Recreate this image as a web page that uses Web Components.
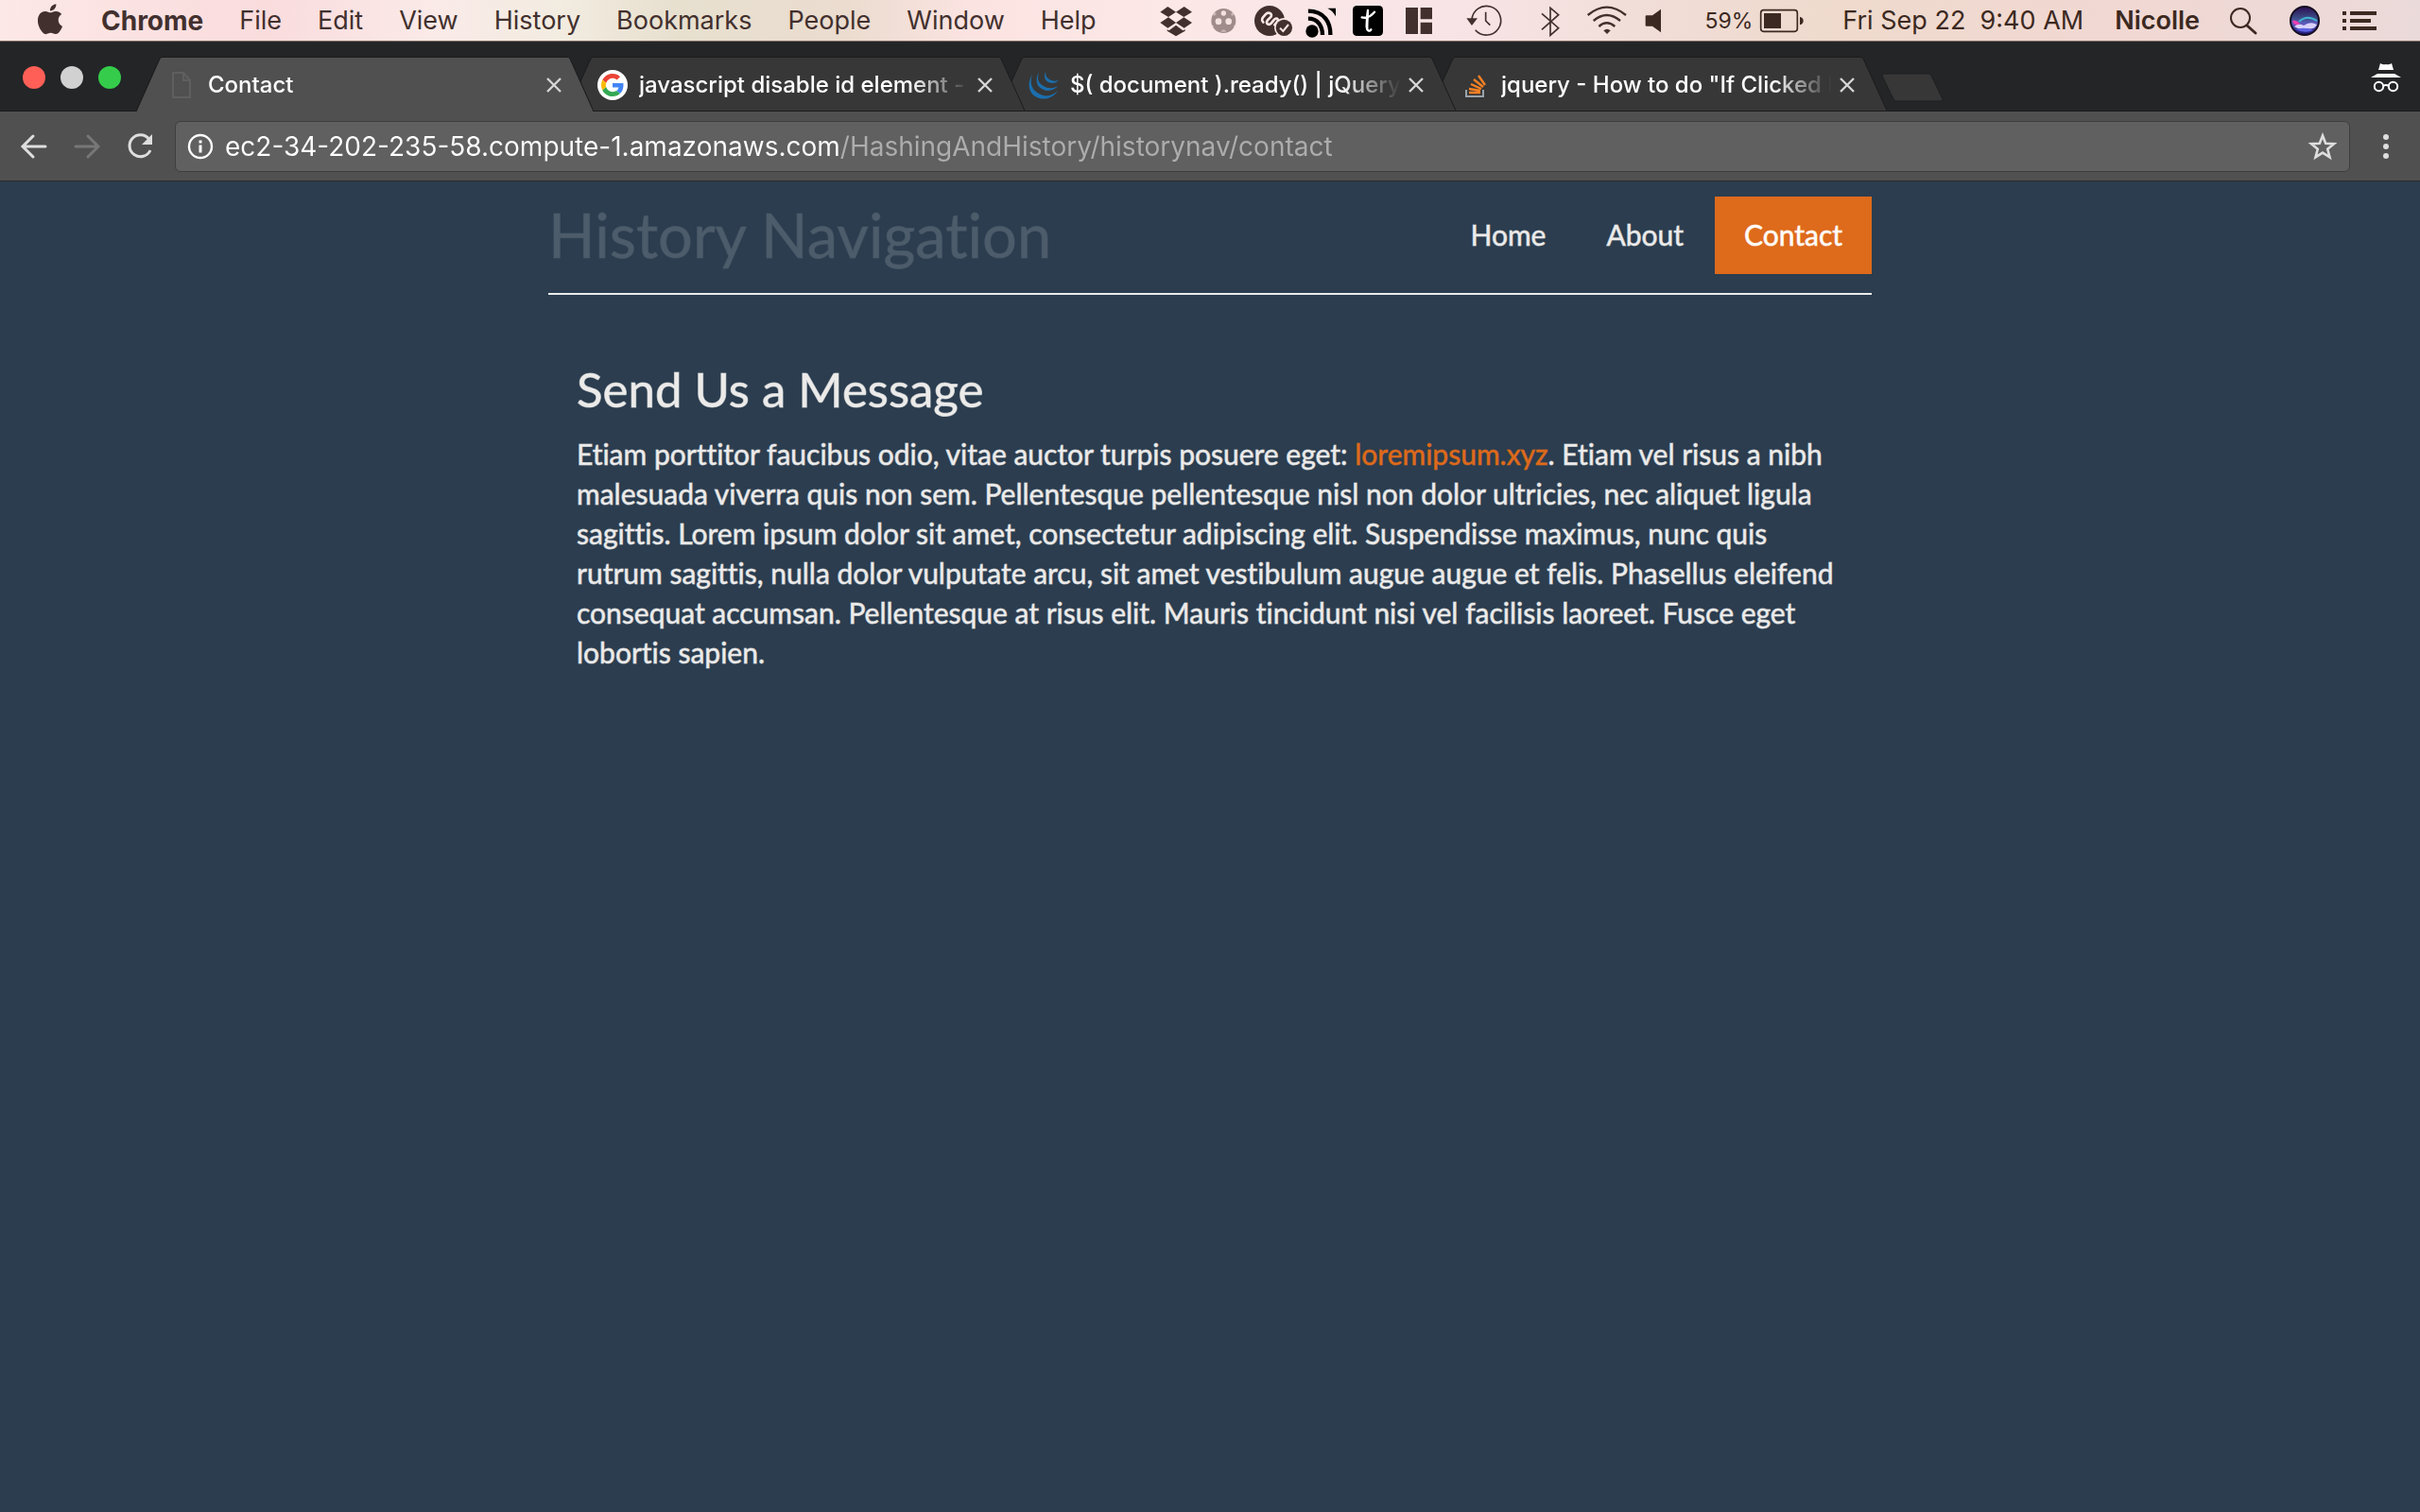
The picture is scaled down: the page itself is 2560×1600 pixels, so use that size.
<!DOCTYPE html>
<html lang="en">
<head>
<meta charset="utf-8">
<title>Contact</title>
<style>
  html, body { margin: 0; min-height: 100%; background: #2b3d4f; }
  body { font-family: Inter, "Liberation Sans", sans-serif; }
</style>
</head>
<body>
<mac-menu-bar></mac-menu-bar>
<browser-window>
  <site-page>
    <site-header slot="header"></site-header>
    <message-section>
      <span slot="heading">Send Us a Message</span>
      Etiam porttitor faucibus odio, vitae auctor turpis posuere eget: <message-link href="#loremipsum">loremipsum.xyz</message-link>. Etiam vel risus a nibh malesuada viverra quis non sem. Pellentesque pellentesque nisl non dolor ultricies, nec aliquet ligula sagittis. Lorem ipsum dolor sit amet, consectetur adipiscing elit. Suspendisse maximus, nunc quis rutrum sagittis, nulla dolor vulputate arcu, sit amet vestibulum augue augue et felis. Phasellus eleifend consequat accumsan. Pellentesque at risus elit. Mauris tincidunt nisi vel facilisis laoreet. Fusce eget lobortis sapien.
    </message-section>
  </site-page>
</browser-window>
<script>
const define = (name, html) => {
  customElements.define(name, class extends HTMLElement {
    constructor() {
      super();
      this.attachShadow({ mode: 'open' }).innerHTML = html;
    }
    connectedCallback() {
      for (const attr of ['href', 'aria-label']) {
        const target = this.shadowRoot.querySelector('[data-' + attr + ']');
        if (target && this.hasAttribute(attr)) target.setAttribute(attr, this.getAttribute(attr));
      }
    }
  });
};

const resetButton = `button { font: inherit; color: inherit; background: none; border: 0; padding: 0; margin: 0; display: block; white-space: pre; }
  svg { display: block; }`;

define('menu-item', `<style>:host { display: block; } ${resetButton}</style><button type="button"><slot></slot></button>`);

define('status-icon', `<style>:host { display: block; } ${resetButton}</style><button type="button" data-aria-label><slot></slot></button>`);

define('mac-menu-bar', `<style>
  :host { display: flex; justify-content: space-between; height: 43px; border-bottom: 1px solid #7c6a63;
    font-size: 27px; line-height: 44px; color: #42302e;
    background: linear-gradient(90deg, #fce8e6 0, #fadcdd 11%, #faeae8 18%, #f3ece1 23%, #e7e0cf 28%, #ebdccf 35%, #fbe3e1 40%, #fce8e7 48%, #f8e4e6 60%, #f0dcd4 70%, #efdacd 76%, #f1d8d3 88%, #ebdada 100%); }
  nav { display: flex; gap: 38px; padding-left: 37px; }
  .status { display: flex; padding-right: 36px; color: #3c2921; }
  svg { display: block; }
  .app { font-weight: 700; font-size: 28px; }
  .pct { font-size: 23px; }
  .battery { padding-right: 39px; }
  .clock { padding-right: 33px; }
  .user { font-weight: 600; padding-right: 21px; }
</style>
<nav aria-label="Menu bar">
  <menu-item aria-label="Apple"><svg width="32" height="43" viewBox="0 -3 24 32" fill="#42302e"><path d="M12.152 6.896c-.948 0-2.415-1.078-3.96-1.04-2.04.027-3.91 1.183-4.961 3.014-2.117 3.675-.546 9.103 1.519 12.09 1.013 1.454 2.208 3.09 3.792 3.039 1.52-.065 2.09-.987 3.935-.987 1.831 0 2.35.987 3.96.948 1.637-.026 2.676-1.48 3.676-2.948 1.156-1.688 1.636-3.325 1.662-3.415-.039-.013-3.182-1.221-3.22-4.857-.026-3.04 2.48-4.494 2.597-4.559-1.429-2.09-3.623-2.324-4.39-2.376-2-.156-3.675 1.09-4.61 1.09zM15.53 3.83c.843-1.012 1.4-2.427 1.245-3.83-1.207.052-2.662.805-3.532 1.818-.78.896-1.454 2.338-1.273 3.714 1.338.104 2.715-.688 3.559-1.701"/></svg></menu-item>
  <menu-item class="app">Chrome</menu-item><menu-item>File</menu-item><menu-item>Edit</menu-item><menu-item>View</menu-item><menu-item>History</menu-item><menu-item>Bookmarks</menu-item><menu-item>People</menu-item><menu-item>Window</menu-item><menu-item>Help</menu-item>
</nav>
<div class="status">
  <status-icon aria-label="Dropbox"><svg width="54" height="43" viewBox="54 0 162 129" fill="#42302e"><path d="M85 38 109 21 135 38 111 54zM135 38 161 21 186 38 160 54zM85 72 111 55 135 72 109 89zM135 72 160 55 186 72 161 89zM107 94 113 97 135 80 157 97 164 94V98L135 115 107 98z"/></svg></status-icon>
  <status-icon aria-label="Sync"><svg width="46" height="43" viewBox="216 0 138 129"><circle cx="286" cy="66" r="39" fill="#a08c8a"/><g fill="#f3e2e0"><circle cx="286" cy="42" r="8"/><circle cx="270" cy="68" r="10"/><circle cx="302" cy="68" r="10"/><path d="M277 101q9-14 18 0zM252 45l6-7 6 7-8 6zM309 45l6-7 6 7-8 6zM247 77l8 5-3 8-5-8zM325 77l-8 5 3 8 5-8z" opacity=".5"/></g></svg></status-icon>
  <status-icon aria-label="Share"><svg width="57" height="43" viewBox="354 0 171 129"><circle cx="432" cy="66" r="48" fill="#42302e"/><path d="M412 71C403 62 411 55 419 46 428 36 443 43 436 54L425 65C418 75 430 82 437 74L447 62C456 53 463 63 455 71L448 79" fill="none" stroke="#fbe8e6" stroke-width="8" stroke-linecap="round"/><circle cx="478" cy="88" r="31" fill="#fbe8e6"/><circle cx="478" cy="88" r="26" fill="#42302e"/><path d="M465 89 475 99 492 78" fill="none" stroke="#fbe8e6" stroke-width="6"/></svg></status-icon>
  <status-icon aria-label="Feed"><svg width="48" height="43" viewBox="525 0 144 129"><circle cx="567" cy="99" r="20" fill="#000"/><clipPath id="f"><path d="M554 26H642V111H554z"/></clipPath><g fill="none" stroke="#000" stroke-width="13" clip-path="url(#f)"><path d="M554 59c32 0 46 24 46 52M554 35c53 0 72 38 71 76"/></g><path d="M616 26h26v26c-6-12-14-20-26-26z"/></svg></status-icon>
  <status-icon aria-label="Tweet"><svg width="53" height="43" viewBox="669 0 159 129"><rect x="696" y="18" width="96" height="96" rx="13"/><path d="M744 33c-3 20-4 42-3 54 1 13 9 13 13 7M725 55c15 4 30-5 40-17" fill="none" stroke="#fff" stroke-width="7" stroke-linecap="round"/><path d="M742 35q5-5 5 0l-2 55-4 8q-5-5-4-18z" fill="#fff"/></svg></status-icon>
  <status-icon aria-label="Window layout"><svg width="58" height="43" viewBox="828 0 174 129" fill="#42302e"><path d="M864 24h39v84h-39zM911 24h37v37h-37zM911 71h37v37h-37z"/></svg></status-icon>
  <status-icon aria-label="Time Machine"><svg width="76" height="43" viewBox="-18 0 228 129"><path d="M54 65A46 46 0 1 1 65 95" fill="none" stroke="#42302e" stroke-width="5"/><path d="M37 58H72L54 81z" fill="#42302e"/><path d="M98 38V66L112 80" fill="none" stroke="#42302e" stroke-width="5"/></svg></status-icon>
  <status-icon aria-label="Bluetooth"><svg width="55" height="43" viewBox="210 0 165 129"><path d="M276 43 329 89 303 112V25L329 47 276 94" fill="none" stroke="#42302e" stroke-width="5"/></svg></status-icon>
  <status-icon aria-label="Wi-Fi"><svg width="67" height="43" viewBox="375 0 201 129"><g fill="none" stroke="#42302e" stroke-width="7"><path d="M422 48Q482 -2 543 48M440 66Q482 30 525 66M457 84Q482 62 508 84"/></g><path d="M472 97Q483 88 494 97L483 108z" fill="#42302e"/></svg></status-icon>
  <status-icon aria-label="Sound"><svg width="73" height="43" viewBox="576 0 219 129"><path d="M608 49h19l27-20v74L627 83H608q-3 0-3-3V52q0-3 3-3z" fill="#3c2921"/></svg></status-icon>
  <menu-item class="pct">59%</menu-item>
  <status-icon class="battery" aria-label="Battery"><svg width="56" height="43" viewBox="942 0 168 129"><rect x="968" y="32" width="116" height="68" rx="9" fill="none" stroke="#3c2921" stroke-width="5"/><rect x="978" y="42" width="54" height="48" fill="#3c2921"/><path d="M1092 53q11 3 11 13t-11 13z" fill="#3c2921"/></svg></status-icon>
  <menu-item class="clock">Fri Sep 22  9:40 AM</menu-item>
  <menu-item class="user">Nicolle</menu-item>
  <status-icon aria-label="Search"><svg width="62" height="43" viewBox="0 0 62 43" fill="none" stroke="#3c2921"><circle cx="22" cy="19" r="10" stroke-width="2"/><path d="M29 27 38 35" stroke-width="3" stroke-linecap="round"/></svg></status-icon>
  <status-icon aria-label="Siri"><svg width="58" height="43" viewBox="0 0 58 43"><defs><linearGradient id="s" x1="0" y1="0" x2="0" y2="1"><stop offset="0" stop-color="#2c0d52"/><stop offset=".4" stop-color="#3b4c86"/><stop offset=".6" stop-color="#5f5cc0"/><stop offset="1" stop-color="#1b1470"/></linearGradient></defs><circle cx="28" cy="22" r="15" fill="url(#s)" stroke="#150d20" stroke-width="2"/><path d="M22 23Q30 15 41 22" fill="none" stroke="#3fb4cf" stroke-width="2"/><path d="M15 22Q19 20 23 25L20 27Q16 26 15 22z" fill="#ec3fb0"/><path d="M17 28Q22 24 27 27 34 22 41 26 38 32 29 30 22 32 17 28z" fill="#d9d0fa"/><path d="M19 31Q28 28 37 32 28 36 19 31z" fill="#5d63e5"/></svg></status-icon>
  <status-icon aria-label="Notification Center"><svg width="56" height="43" viewBox="0 0 56 43" fill="#3c2921"><path d="M10 12h4v4h-4zM18 12h28v4H18zM10 20h4v4h-4zM18 20h22v4H18zM10 28h4v4h-4zM18 28h28v4H18z"/></svg></status-icon>
</div>`);

define('browser-tab', `<style>
  :host { display: block; position: relative; flex: 0 1 auto; width: 484px; min-width: 0; height: 57px; margin-right: -28px; --fill: #373737; }
  :host([active]) { --fill: #505050; }
  .shape { position: absolute; inset: 0; width: 100%; height: 100%; }
  .row { position: relative; display: flex; align-items: center; height: 57px; padding: 2px 30px 0 32px; gap: 4px; box-sizing: border-box; }
  .icon { width: 32px; height: 32px; flex: none; padding-right: 8px; }
  .title { flex: 1; min-width: 0; overflow: hidden; white-space: nowrap; font-size: 24px; line-height: 32px; font-weight: 500; color: #fff;
    -webkit-mask-image: linear-gradient(90deg, #000 82%, transparent 100%); }
  button { border: 0; background: none; padding: 0; width: 24px; height: 24px; flex: none; }
  svg { display: block; }
</style>
<svg class="shape" viewBox="0 0 484 57" preserveAspectRatio="none"><path d="M0 57 25 2Q26 .5 28 .5H456Q458 .5 459 2L484 57z" fill="var(--fill)"/><path d="M0 57 25 2Q26 .5 28 .5H456Q458 .5 459 2L484 57" fill="none" stroke="#1c1c1d" stroke-width="1"/></svg>
<div class="row" role="tab"><div class="icon"><slot name="icon"></slot></div><div class="title"><slot></slot></div>
<button type="button" aria-label="Close tab"><svg width="24" height="24" viewBox="0 0 24 24"><path d="M5 5 19 19M19 5 5 19" stroke="#d6d6d6" stroke-width="2.4"/></svg></button></div>`);

define('tab-strip', `<style>
  :host { display: flex; align-items: flex-end; justify-content: space-between; height: 73px; background: #232527; border-bottom: 1px solid #1c1c1d; }
  .left, .tabs { display: flex; align-items: flex-end; min-width: 0; }
  .lights { display: flex; gap: 16px; padding: 0 16px 23px 24px; flex: none; }
  .lights button { width: 24px; height: 24px; border: 0; border-radius: 50%; padding: 0; }
  .close { background: #ff5f57; } .min { background: #d1d1d1; } .zoom { background: #35cc4b; }
  .new { border: 0; background: none; padding: 0 0 9px 22px; }
  .incognito { padding: 0 18px 18px 0; }
  svg { display: block; }
  browser-tab:nth-child(1) { z-index: 4; height: 58px; margin-bottom: -1px; }
  browser-tab:nth-child(2) { z-index: 3; }
  browser-tab:nth-child(3) { z-index: 2; }
  browser-tab:nth-child(4) { z-index: 1; }
</style>
<div class="left">
  <div class="lights"><button class="close" aria-label="Close"></button><button class="min" aria-label="Minimize"></button><button class="zoom" aria-label="Zoom"></button></div>
  <div class="tabs" role="tablist">
    <browser-tab active><svg slot="icon" width="32" height="32" viewBox="0 0 32 32" fill="none" stroke="#5f5f5f" stroke-width="2"><path d="M7 3H18L25 11V29H7zM18 3V11H25"/></svg>Contact</browser-tab>
    <browser-tab><svg slot="icon" width="32" height="32" viewBox="0 0 64 64"><circle cx="32" cy="32" r="32" fill="#fff"/><g transform="translate(8 8)"><path fill="#EA4335" d="M24 9.5c3.54 0 6.71 1.22 9.21 3.6l6.85-6.85C35.9 2.38 30.47 0 24 0 14.62 0 6.51 5.38 2.56 13.22l7.98 6.19C12.43 13.72 17.74 9.5 24 9.5z"/><path fill="#4285F4" d="M46.98 24.55c0-1.57-.15-3.09-.38-4.55H24v9.02h12.94c-.58 2.96-2.26 5.48-4.78 7.18l7.73 6c4.51-4.18 7.09-10.36 7.09-17.65z"/><path fill="#FBBC05" d="M10.53 28.59c-.48-1.45-.76-2.99-.76-4.59s.27-3.14.76-4.59l-7.98-6.19C.92 16.46 0 20.12 0 24c0 3.88.92 7.54 2.56 10.78l7.97-6.19z"/><path fill="#34A853" d="M24 48c6.48 0 11.93-2.13 15.89-5.81l-7.73-6c-2.15 1.45-4.92 2.3-8.16 2.3-6.26 0-11.57-4.22-13.47-9.91l-7.98 6.19C6.51 42.62 14.62 48 24 48z"/></g></svg>javascript disable id element -</browser-tab>
    <browser-tab><svg slot="icon" width="32" height="32" viewBox="0 0 32 32" fill="#1b6fae"><path d="M4 5C-2 14 0 25 9 29 17 33 27 29 31 22 25 28 17 29 11 25 3 21 1 13 4 5zM11 3C7 9 8 17 14 20 20 24 28 21 31 17 26 20 20 20 16 17 10 14 9 9 11 3zM18 2C16 6 17 11 21 13 25 15 29 14 32 11 28 12 25 12 22 10 19 8 18 6 18 2z"/></svg>$( document ).ready() | jQuery</browser-tab>
    <browser-tab><svg slot="icon" width="32" height="32" viewBox="0 0 32 32" fill="none"><path d="M7 21V28H25V21" stroke="#9aa3aa" stroke-width="2"/><path d="M10 24H22M10 20 22 22M12 15 23 20M15 10 25 18M20 6 27 16" stroke="#f48024" stroke-width="2.4"/></svg>jquery - How to do "If Clicked E</browser-tab>
  </div>
  <button class="new" type="button" aria-label="New tab"><svg width="66" height="31" viewBox="0 0 66 31"><path d="M3 1H50Q52 1 53 3L65 28Q65 30 63 30H17Q14 30 13 28L1 3Q1 1 3 1z" fill="#373737" stroke="#1e1f20"/></svg></button>
</div>
<div class="incognito"><svg width="36" height="34" viewBox="0 0 36 34"><path d="M12 2Q15 4 18 3 21 4 24 2L26 9H10zM2 17 9 13H27L34 17z" fill="#fff"/><g fill="none" stroke="#fff" stroke-width="2"><circle cx="10.500" cy="26.500" r="4.700"/><circle cx="25.500" cy="26.500" r="4.700"/><path d="M15 26Q18 24 21 26"/></g></svg></div>`);

define('address-bar', `<style>
  :host { display: flex; align-items: center; height: 73px; background: #505050; border-bottom: 1px solid #2b2b2c; }
  button { border: 0; background: none; padding: 0; flex: none; }
  svg { display: block; }
  .nav { display: flex; gap: 24px; padding: 0 18px 0 20px; }
  form { flex: 1; display: flex; align-items: center; gap: 12px; height: 54px; box-sizing: border-box; background: #606060; border: 1px solid #3e3e3e; border-radius: 6px; padding: 0 12px; }
  input { flex: 1; min-width: 0; border: 0; outline: 0; padding: 0; height: 40px; font: 400 28px Inter, "Liberation Sans", sans-serif;
    color: transparent; background: linear-gradient(90deg, #fff 651px, #adadad 651px); -webkit-background-clip: text; background-clip: text; }
  .more { padding: 0 19px 0 21px; }
</style>
<div class="nav">
  <button aria-label="Back"><svg width="32" height="32" viewBox="0 0 32 32" fill="none" stroke="#dedede" stroke-width="3" stroke-linecap="round"><path d="M28 16H5M15 5 4 16 15 27"/></svg></button>
  <button aria-label="Forward"><svg width="32" height="32" viewBox="0 0 32 32" fill="none" stroke="#777" stroke-width="3" stroke-linecap="round"><path d="M4 16H27M17 5 28 16 17 27"/></svg></button>
  <button aria-label="Reload"><svg width="35" height="32" viewBox="1 0 35 32"><path d="M26.500 8A11.500 11.500 0 1 0 28 20" fill="none" stroke="#dedede" stroke-width="3"/><path d="M30 3V14H19z" fill="#dedede"/></svg></button>
</div>
<form onsubmit="return false">
  <button type="button" aria-label="Site information"><svg width="28" height="28" viewBox="0 0 28 28"><circle cx="14" cy="14" r="12" fill="none" stroke="#fff" stroke-width="2.400"/><path d="M12.500 7.500h3v3h-3zM12.500 12.500h3v8h-3z" fill="#fff"/></svg></button>
  <input type="text" aria-label="Address" spellcheck="false" value="ec2-34-202-235-58.compute-1.amazonaws.com/HashingAndHistory/historynav/contact">
  <button type="button" aria-label="Bookmark this page"><svg width="32" height="32" viewBox="0 0 32 32"><path d="M16 4.500 19.200 12.800 28 13.200 21.200 18.800 23.500 27.400 16 22.600 8.500 27.400 10.800 18.800 4 13.200 12.800 12.800z" fill="none" stroke="#dedede" stroke-width="2.600"/></svg></button>
</form>
<button class="more" aria-label="Menu"><svg width="34" height="32" viewBox="0 0 34 32" fill="#dedede"><circle cx="17" cy="6" r="3"/><circle cx="17" cy="16" r="3"/><circle cx="17" cy="26" r="3"/></svg></button>`);

define('browser-window', `<style>:host { display: block; }</style><tab-strip></tab-strip><address-bar></address-bar><slot></slot>`);

define('nav-link', `<style>
  :host { display: block; }
  a { display: block; padding: 19px 31px 21px; color: #ecebea; text-decoration: none; font-size: 30px; line-height: 42px; -webkit-text-stroke: 1px rgb(236 235 234 / .6); }
  :host([current]) a { background: #de6a1b; color: #fff; -webkit-text-stroke-color: rgb(255 255 255 / .6); }
</style><a data-href href="#"><slot></slot></a>`);

define('site-header', `<style>
  :host { display: flex; justify-content: space-between; align-items: flex-start; padding: 16px 0 20px; border-bottom: 2px solid #ecebea; }
  h1 { margin: 0; font-size: 65px; line-height: 80px; font-weight: 400; color: #4d5c6a; -webkit-text-stroke: 1px rgb(77 92 106 / .6); }
  nav { display: flex; gap: 2px; }
</style>
<h1>History Navigation</h1>
<nav><nav-link href="#home">Home</nav-link><nav-link href="#about">About</nav-link><nav-link href="#contact" current>Contact</nav-link></nav>`);

define('message-link', `<style>:host { display: inline; } a { color: #de6a1b; text-decoration: none; -webkit-text-stroke-color: rgb(222 106 27 / .6); }</style><a data-href href="#"><slot></slot></a>`);

define('message-section', `<style>
  :host { display: block; padding: 65px 30px; color: #ecebea; -webkit-text-stroke: 1px rgb(236 235 234 / .6); }
  h2 { margin: 0 0 12px; font-size: 51px; line-height: 70px; font-weight: 400; }
  p { margin: 0; font-size: 30px; line-height: 42px; }
</style><h2><slot name="heading"></slot></h2><p><slot></slot></p>`);

define('site-page', `<style>:host { display: block; max-width: 1400px; margin: 0 auto; font-family: Lato, "Liberation Sans", sans-serif; font-variant-ligatures: none; }</style><slot name="header"></slot><main><slot></slot></main>`);
</script>
</body>
</html>
